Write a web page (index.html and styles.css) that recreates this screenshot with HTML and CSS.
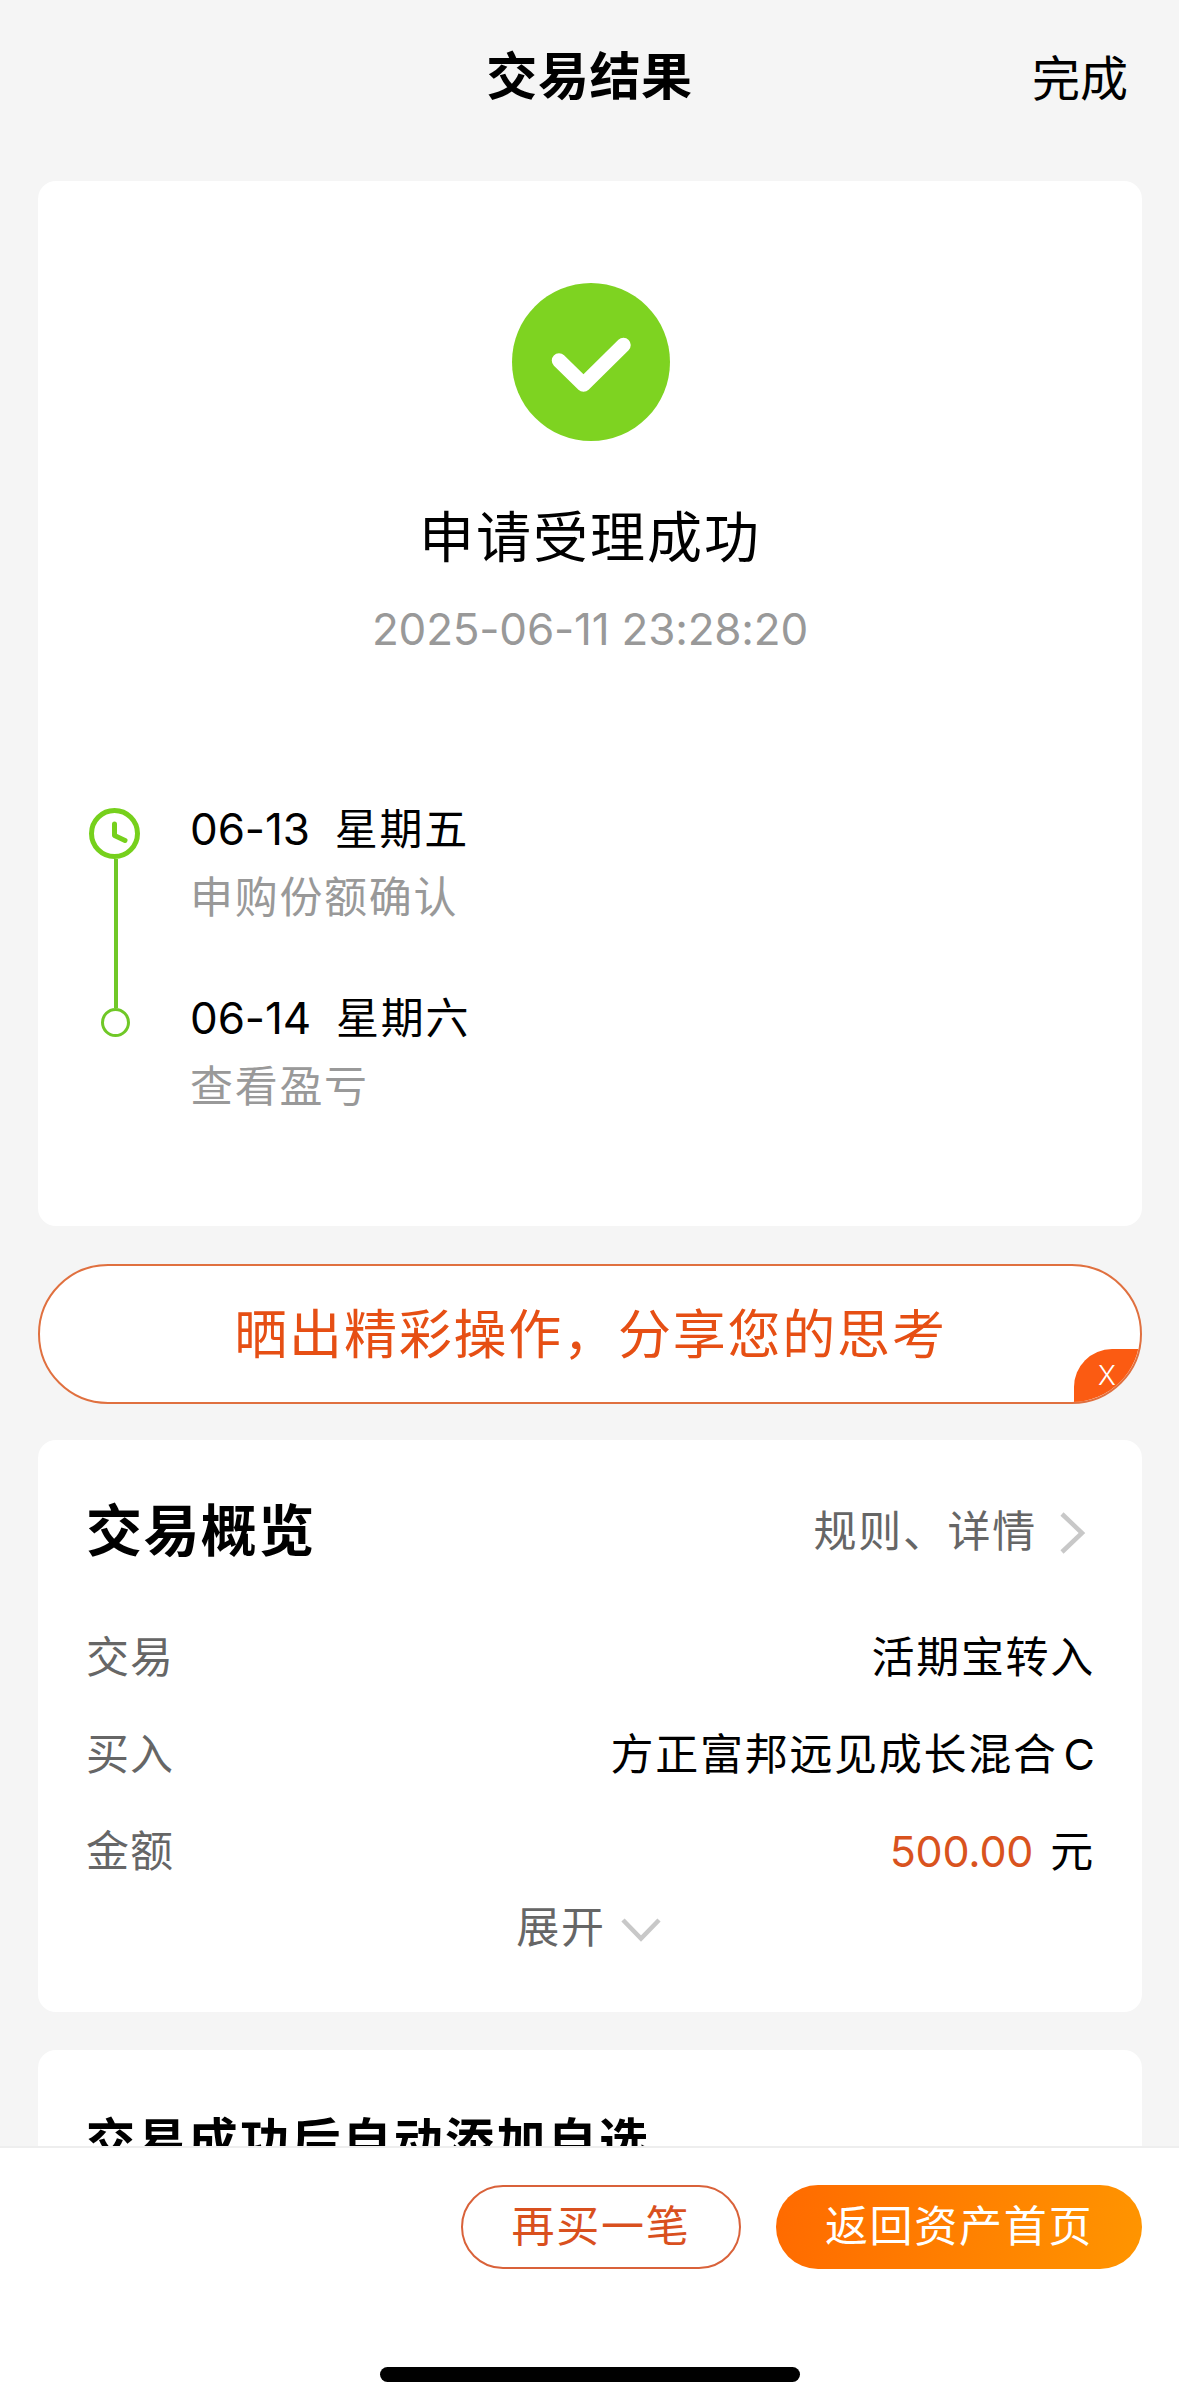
FILE: index.html
```html
<!DOCTYPE html>
<html lang="zh-CN">
<head>
  <meta charset="UTF-8">
  <meta name="viewport" content="width=device-width, initial-scale=1.0">
  <title>交易结果</title>
  <link rel="stylesheet" href="styles.css">
</head>
<body>
  <div class="page">
    <header class="navbar">
      <h1>交易结果</h1>
      <a class="done">完成</a>
    </header>

    <main class="content">
      <section class="card result">
        <svg class="success-icon" viewBox="0 0 158 158">
          <circle cx="79" cy="79" r="79" fill="#7ed321"/>
          <path d="M47 77.5 L71.5 101.5 L111.5 62" fill="none" stroke="#fff" stroke-width="14.5" stroke-linecap="round" stroke-linejoin="round"/>
        </svg>
        <h2 class="result-title">申请受理成功</h2>
        <p class="result-time">2025-06-11 23:28:20</p>

        <div class="timeline">
          <div class="track">
            <svg class="clock" viewBox="0 0 51 51">
              <circle cx="25.5" cy="25.5" r="23" fill="none" stroke="#76d01c" stroke-width="5"/>
              <path d="M25.5 16 V27.5 L36 32.5" fill="none" stroke="#76d01c" stroke-width="5" stroke-linecap="round" stroke-linejoin="round"/>
            </svg>
            <div class="line"></div>
            <div class="dot"></div>
          </div>
          <ul class="steps">
            <li>
              <div class="step-date"><span class="day">06-13</span><span>星期五</span></div>
              <div class="step-desc">申购份额确认</div>
            </li>
            <li>
              <div class="step-date"><span class="day">06-14</span><span>星期六</span></div>
              <div class="step-desc">查看盈亏</div>
            </li>
          </ul>
        </div>
      </section>

      <div class="banner">
        <span>晒出精彩操作，分享您的思考</span>
        <div class="banner-close">X</div>
      </div>

      <section class="card overview">
        <div class="overview-head">
          <h3>交易概览</h3>
          <a class="more">
            <span>规则、详情</span>
            <svg class="arrow-right" viewBox="0 0 28 44">
              <path d="M3 3 L23 22 L3 41" fill="none" stroke="#c8c8c8" stroke-width="4.5"/>
            </svg>
          </a>
        </div>
        <div class="row">
          <span class="label">交易</span>
          <span class="value">活期宝转入</span>
        </div>
        <div class="row">
          <span class="label">买入</span>
          <span class="value">方正富邦远见成长混合<span class="share-class">C</span></span>
        </div>
        <div class="row">
          <span class="label">金额</span>
          <span class="value"><span class="amount">500.00</span>元</span>
        </div>
        <div class="expand">
          <span>展开</span>
          <svg class="arrow-down" viewBox="0 0 40 24">
            <path d="M2 2 L20 20.5 L38 2" fill="none" stroke="#c8c8c8" stroke-width="4.5"/>
          </svg>
        </div>
      </section>

      <section class="card watchlist">
        <h3>交易成功后自动添加自选</h3>
      </section>
    </main>

    <footer class="footer">
      <div class="actions">
        <button class="btn btn-outline">再买一笔</button>
        <button class="btn btn-primary">返回资产首页</button>
      </div>
      <div class="home-bar"></div>
    </footer>
  </div>
</body>
</html>
```

FILE: styles.css
```css
* {
  box-sizing: border-box;
  margin: 0;
  padding: 0;
}
body {
  font-family: Inter, "Noto Sans CJK SC", sans-serif;
  background-color: #f5f5f5;
  color: #000;
  font-size: 43px;
  line-height: 1.2;
  letter-spacing: 1.7px;
}
.page {
  display: flex;
  flex-direction: column;
  height: 2406px;
  overflow: hidden;
}
svg {
  display: block;
  flex: none;
}

/* top bar */
.navbar {
  display: grid;
  grid-template-columns: 1fr auto 1fr;
  align-items: center;
  height: 150px;
  padding: 3px 51px 0;
  flex: none;
}
.navbar h1 {
  grid-column: 2;
  font-size: 51px;
  font-weight: 600;
  letter-spacing: 0.6px;
}
.done {
  justify-self: end;
  padding-top: 4px;
  font-size: 48px;
  letter-spacing: 0;
}

.content {
  flex: 1;
  min-height: 0;
  overflow: hidden;
  padding: 31px 37px 0 38px;
}
.card {
  background-color: #fff;
  border-radius: 18px;
}

/* result */
.result {
  height: 1045px;
  padding: 102px 49px 0 51px;
}
.success-icon {
  width: 158px;
  height: 158px;
  margin: 0 auto;
}
.result-title {
  margin-top: 66px;
  padding-right: 2px;
  font-size: 55px;
  font-weight: 400;
  line-height: 60px;
  letter-spacing: 2px;
  text-align: center;
}
.result-time {
  margin-top: 40px;
  padding-right: 2px;
  font-size: 44px;
  line-height: 45px;
  letter-spacing: -0.2px;
  text-align: center;
  color: #999;
}
.timeline {
  display: flex;
  gap: 50px;
  margin-top: 152px;
}
.track {
  display: flex;
  flex-direction: column;
  align-items: center;
  width: 51px;
  height: 233px;
  padding-top: 4px;
}
.clock {
  width: 51px;
  height: 51px;
}
.line {
  flex: 1;
  width: 4px;
  margin-left: 2px;
  background-color: #70c827;
}
.dot {
  width: 29px;
  height: 29px;
  margin-left: 2px;
  border: 3px solid #70c827;
  border-radius: 50%;
}
.steps {
  list-style: none;
}
.steps li {
  height: 189px;
}
.step-date {
  display: flex;
  gap: 25px;
  line-height: 50px;
}
.day {
  font-size: 44px;
  letter-spacing: -0.1px;
}
.step-desc {
  margin-top: 18px;
  line-height: 50px;
  color: #999;
}

/* share banner */
.banner {
  position: relative;
  display: flex;
  align-items: center;
  justify-content: center;
  height: 140px;
  margin: 38px 0 36px;
  padding: 3px 0 0 1px;
  border: 2px solid #e0703f;
  border-radius: 70px;
  background-color: #fff;
  overflow: hidden;
  font-size: 53px;
  letter-spacing: 1.8px;
  color: #e64f14;
}
.banner-close {
  position: absolute;
  right: 0;
  bottom: 0;
  width: 66px;
  height: 53px;
  padding-left: 24px;
  border-top-left-radius: 38px;
  background-color: #fb5b12;
  color: #fff;
  font-size: 27px;
  font-weight: 300;
  line-height: 54px;
  letter-spacing: 0;
}

/* overview */
.overview {
  height: 572px;
  padding: 52px 47px 0 48px;
}
.overview-head {
  display: flex;
  align-items: center;
  justify-content: space-between;
  height: 80px;
  margin-bottom: 37px;
}
.overview h3 {
  font-size: 56px;
  font-weight: 600;
  letter-spacing: 1.4px;
}
.more {
  display: flex;
  align-items: center;
  gap: 22px;
  padding-right: 8px;
  color: #666;
}
.arrow-right {
  width: 28px;
  height: 44px;
  margin-top: 2px;
}
.row {
  display: flex;
  align-items: center;
  justify-content: space-between;
  height: 97px;
}
.label {
  color: #666;
  letter-spacing: 1px;
}
.share-class {
  margin-left: 6px;
  letter-spacing: 0;
}
.amount {
  margin-right: 17px;
  letter-spacing: -0.2px;
  color: #d9531e;
}
.expand {
  display: flex;
  align-items: center;
  justify-content: center;
  gap: 15px;
  height: 56px;
  padding-right: 4px;
  color: #666;
}
.arrow-down {
  width: 40px;
  height: 24px;
  margin-top: 3px;
}

.watchlist {
  height: 300px;
  margin-top: 38px;
  padding: 62px 48px 0;
}
.watchlist h3 {
  font-size: 49px;
  font-weight: 600;
  line-height: 60px;
  letter-spacing: 2.3px;
}

/* bottom actions */
.footer {
  flex: none;
  height: 260px;
  border-top: 2px solid #eee;
  background-color: #fff;
}
.actions {
  display: flex;
  justify-content: flex-end;
  gap: 35px;
  padding: 37px 37px 0 0;
}
.btn {
  height: 84px;
  border: none;
  border-radius: 42px;
  font: inherit;
  letter-spacing: inherit;
}
.btn-outline {
  width: 280px;
  border: 2px solid #d9623a;
  background-color: #fff;
  color: #d9501e;
}
.btn-primary {
  width: 366px;
  background: linear-gradient(100deg, #ff6a00, #ff9500);
  color: #fff;
}
.home-bar {
  width: 420px;
  height: 15px;
  margin: 98px auto 0;
  border-radius: 8px;
  background-color: #000;
}
```
